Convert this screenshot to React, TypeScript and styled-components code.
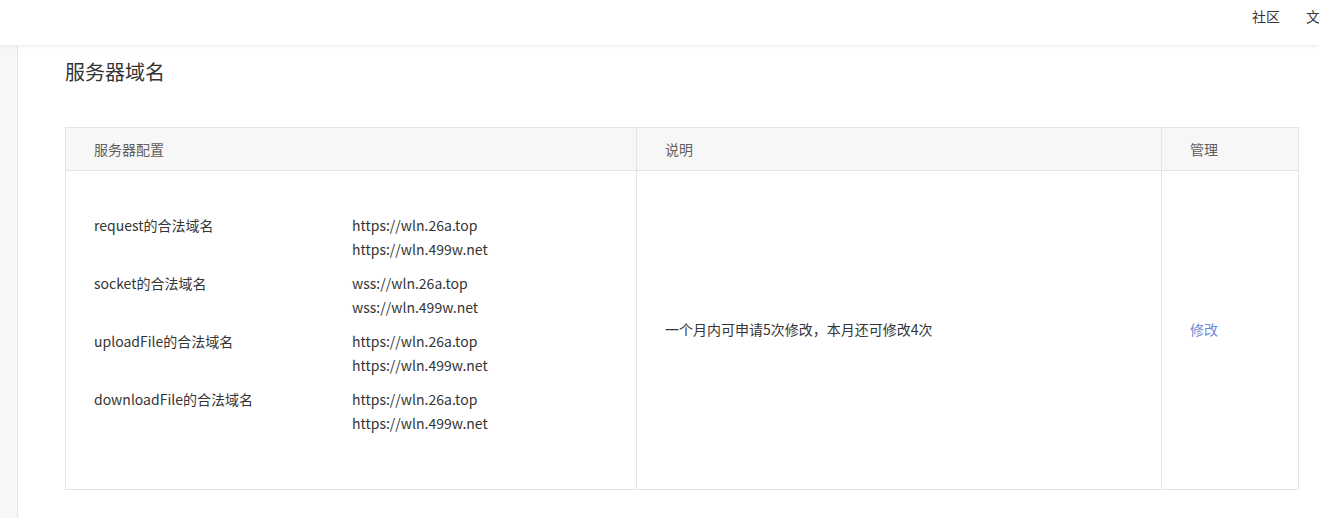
import React from 'react'
import styled, { createGlobalStyle } from 'styled-components'

const GlobalStyle = createGlobalStyle`
  html, body {
    margin: 0;
    padding: 0;
    background: #fff;
    font-family: "Noto Sans CJK SC", "Noto Sans", sans-serif;
    color: #353535;
  }
`

interface DomainRow {
  label: string
  urls: string[]
}

const rows: DomainRow[] = [
  { label: 'request的合法域名', urls: ['https://wln.26a.top', 'https://wln.499w.net'] },
  { label: 'socket的合法域名', urls: ['wss://wln.26a.top', 'wss://wln.499w.net'] },
  { label: 'uploadFile的合法域名', urls: ['https://wln.26a.top', 'https://wln.499w.net'] },
  { label: 'downloadFile的合法域名', urls: ['https://wln.26a.top', 'https://wln.499w.net'] }
]

const Page = styled.div`
  width: 1319px;
  height: 518px;
  overflow: hidden;
  display: flex;
  flex-direction: column;
`

const TopBar = styled.header`
  height: 45px;
  flex-shrink: 0;
  background: #fff;
  box-shadow: 0 1px 4px rgba(0, 0, 0, 0.08);
  display: flex;
  align-items: flex-start;
  overflow: hidden;
  position: relative;
  z-index: 2;
`

const NavLinks = styled.nav`
  display: flex;
  flex-shrink: 0;
  gap: 26px;
  margin-left: 1252px;
  padding-top: 6px;
  font-size: 14px;
  line-height: 20px;
  white-space: nowrap;
  color: #353535;
`

const Body = styled.div`
  flex: 1;
  display: flex;
`

const Sidebar = styled.aside`
  width: 17px;
  background: #f7f7f7;
  border-right: 1px solid #e7e7eb;
`

const Main = styled.main`
  flex: 1;
  padding: 13px 20px 0 47px;
`

const Title = styled.h2`
  margin: 0;
  font-size: 20px;
  font-weight: 400;
  line-height: 28px;
  color: #353535;
`

const Table = styled.div`
  margin-top: 41px;
  border: 1px solid #e4e4e4;
  display: grid;
  grid-template-columns: 571px 525px 1fr;
`

const HeadCell = styled.div<{ last?: boolean }>`
  height: 42px;
  background: #f7f7f7;
  border-bottom: 1px solid #e4e4e4;
  border-right: ${({ last }) => (last ? 'none' : '1px solid #e4e4e4')};
  padding-left: 28px;
  display: flex;
  align-items: center;
  font-size: 14px;
  color: #5f5f5f;
`

const Cell = styled.div<{ last?: boolean }>`
  border-right: ${({ last }) => (last ? 'none' : '1px solid #e4e4e4')};
  padding: 42px 0 44px 28px;
  display: flex;
  flex-direction: column;
  justify-content: center;
  font-size: 14px;
  color: #353535;
`

const ConfigCell = styled(Cell)`
  justify-content: flex-start;
`

const ConfigGroup = styled.div`
  display: flex;
  margin-bottom: 10px;
  line-height: 24px;
`

const ConfigLabel = styled.div`
  width: 258px;
  flex-shrink: 0;
`

const UrlList = styled.div`
  display: flex;
  flex-direction: column;
`

const EditLink = styled.a`
  color: #6b8bd6;
  text-decoration: none;
  cursor: pointer;
`

export default function App (): React.ReactElement {
  return (
    <Page>
      <GlobalStyle />
      <TopBar>
        <NavLinks>
          <span>社区</span>
          <span>文档</span>
        </NavLinks>
      </TopBar>
      <Body>
        <Sidebar />
        <Main>
          <Title>服务器域名</Title>
          <Table>
            <HeadCell>服务器配置</HeadCell>
            <HeadCell>说明</HeadCell>
            <HeadCell last>管理</HeadCell>
            <ConfigCell>
              {rows.map((row) => (
                <ConfigGroup key={row.label}>
                  <ConfigLabel>{row.label}</ConfigLabel>
                  <UrlList>
                    {row.urls.map((url) => <span key={url}>{url}</span>)}
                  </UrlList>
                </ConfigGroup>
              ))}
            </ConfigCell>
            <Cell>
              <span>一个月内可申请5次修改，本月还可修改4次</span>
            </Cell>
            <Cell last>
              <EditLink>修改</EditLink>
            </Cell>
          </Table>
        </Main>
      </Body>
    </Page>
  )
}
